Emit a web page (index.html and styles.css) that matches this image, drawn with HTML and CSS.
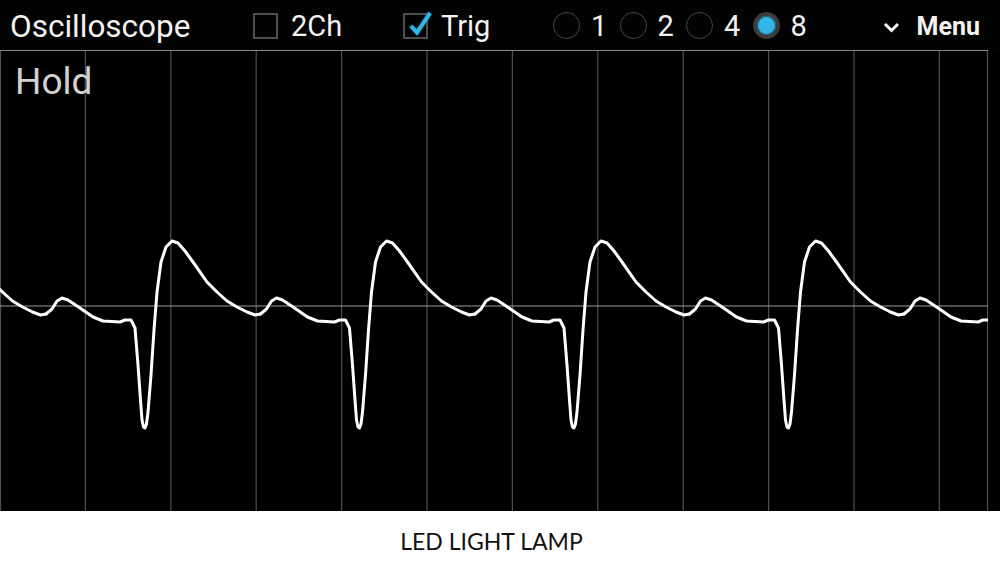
FILE: index.html
```html
<!DOCTYPE html>
<html>
<head>
<meta charset="utf-8">
<link rel="stylesheet" href="styles.css">
</head>
<body>
<div class="app">
  <header class="bar">
    <div class="title">Oscilloscope</div>
    <label class="chk">
      <span class="box"></span><span class="lbl">2Ch</span>
    </label>
    <label class="chk">
      <span class="box"><svg class="tick" width="32" height="32" viewBox="0 0 32 32"><path d="M8 15 L14 21.5 L27 2" fill="none" stroke="#33b5e5" stroke-width="4" stroke-linecap="butt" stroke-linejoin="miter"/></svg></span><span class="lbl">Trig</span>
    </label>
    <div class="radios">
      <div class="radio"><span class="dot"></span><span class="lbl">1</span></div>
      <div class="radio"><span class="dot"></span><span class="lbl">2</span></div>
      <div class="radio"><span class="dot"></span><span class="lbl">4</span></div>
      <div class="radio on"><span class="dot"></span><span class="lbl">8</span></div>
    </div>
    <div class="menu">
      <svg class="chev" width="17" height="12" viewBox="0 0 17 12"><path d="M2 3 L8.5 9.5 L15 3" fill="none" stroke="#fff" stroke-width="3"/></svg>
      <span>Menu</span>
    </div>
  </header>
  <main class="plot">
    <svg class="scope" width="1000" height="461" viewBox="0 0 1000 461">
      <defs>
        <clipPath id="clip"><rect x="0" y="0" width="988" height="461"/></clipPath>
        <polyline id="period" fill="none" stroke="#fff" stroke-width="3" stroke-linejoin="round" stroke-linecap="round"
          points="46,264 52,259 57,251 62,248 68,250 80,258 93,267 103,271 120,272 125,270 131,270 135,278 138,315 140.5,350 142,370 143.5,377 145,378 146.5,374 148,362 151,325 154,280 157,242 161,212 166,197 172,191 178,193 185,201 193,212 207,232 217,242 227,251 237,257 247,262 255,265 260.5,264"/>
      </defs>
      <g stroke="#4f4f4f" stroke-width="1.2">
        <line x1="0.5" y1="0" x2="0.5" y2="461"/>
        <line x1="85.4" y1="0" x2="85.4" y2="461"/>
        <line x1="170.8" y1="0" x2="170.8" y2="461"/>
        <line x1="256.2" y1="0" x2="256.2" y2="461"/>
        <line x1="341.6" y1="0" x2="341.6" y2="461"/>
        <line x1="427" y1="0" x2="427" y2="461"/>
        <line x1="512.4" y1="0" x2="512.4" y2="461"/>
        <line x1="597.8" y1="0" x2="597.8" y2="461"/>
        <line x1="683.2" y1="0" x2="683.2" y2="461"/>
        <line x1="768.6" y1="0" x2="768.6" y2="461"/>
        <line x1="854" y1="0" x2="854" y2="461"/>
        <line x1="939.4" y1="0" x2="939.4" y2="461"/>
        <line x1="987.5" y1="0" x2="987.5" y2="461"/>
      </g>
      <line x1="0" y1="0.5" x2="988" y2="0.5" stroke="#8a8a8a" stroke-width="1.2"/>
      <line x1="0" y1="256" x2="988" y2="256" stroke="#9a9a9a" stroke-width="1.2"/>
      <g clip-path="url(#clip)">
        <use href="#period" transform="translate(-214.5,0)"/>
        <use href="#period"/>
        <use href="#period" transform="translate(214.5,0)"/>
        <use href="#period" transform="translate(429,0)"/>
        <use href="#period" transform="translate(643.5,0)"/>
        <use href="#period" transform="translate(858,0)"/>
      </g>
    </svg>
    <div class="hold">Hold</div>
  </main>
  <footer class="caption">LED LIGHT LAMP</footer>
</div>
</body>
</html>
```
FILE: styles.css
```css
* { box-sizing: border-box; }
html, body { margin: 0; padding: 0; }
body { background: #000; width: 1000px; height: 563px; overflow: hidden; }
.app { display: flex; flex-direction: column; width: 1000px; height: 563px; }
.bar {
  height: 50px; display: flex; align-items: center; background: #030303;
  font-family: Roboto, "Noto Sans", sans-serif; color: #f2f2f2; font-size: 29px;
  padding-top: 3px;
}
.title { width: 253px; padding-left: 10px; line-height: 1; font-size: 31.5px; }
.chk { display: flex; align-items: center; width: 150px; }
.box {
  width: 25px; height: 26px; border: 2px solid #4d4d4d; position: relative; margin-top: -2px;
}
.tick { position: absolute; left: -2px; top: -4px; filter: drop-shadow(0 0 1px rgba(51,181,229,0.6)); }
.lbl { line-height: 1; }
.chk .lbl { margin-left: 13px; }
.radios { display: flex; align-items: center; }
.radio { display: flex; align-items: center; width: 66.5px; }
.dot {
  width: 27px; height: 27px; border-radius: 50%; border: 1.5px solid #454545; margin-top: -2px;
}
.radio.on .dot { border: 4px solid #3c3c3c; background: #33b5e5; box-shadow: inset 0 0 0 1px #1a5a72; }
.radio .lbl { margin-left: 11px; }
.menu { margin-left: auto; padding-right: 20px; display: flex; align-items: center; font-weight: bold; font-size: 25px; }
.chev { margin-right: 17px; margin-top: 0; }
.menu span { line-height: 1; margin-top: -1px; }
.plot { position: relative; height: 461px; background: #000; }
.scope { display: block; }
.hold {
  position: absolute; left: 15px; top: 13px;
  font-family: Roboto, "Noto Sans", sans-serif; font-size: 37px; line-height: 1; color: #d2d2d2;
}
.caption {
  flex: 1; background: #fff; display: flex; align-items: center; justify-content: center;
  font-family: Lato, "Open Sans", sans-serif; font-size: 23px; color: #111;
  padding-right: 17px; padding-top: 7px;
}
```
